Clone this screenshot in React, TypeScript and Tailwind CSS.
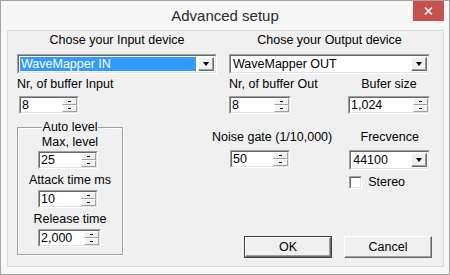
import React from "react";

const font = { fontFamily: '"Liberation Sans", Arial, sans-serif' };

function SpinBtn({ up }: { up: boolean }) {
  return (
    <div className="flex h-1/2 items-center justify-center border border-t-white border-l-white border-b-[#a0a0a0] border-r-[#a0a0a0] bg-[#f0f0f0]">
      <div className={up ? "h-[1px] w-[3px] bg-black" : "h-[1px] w-[3px] bg-black"} />
    </div>
  );
}

function Spin({ value, className }: { value: string; className: string }) {
  return (
    <div className={`flex h-[18px] border border-t-[#a0a0a0] border-l-[#a0a0a0] border-b-white border-r-white ${className}`}>
      <div className="flex flex-1 border border-t-[#696969] border-l-[#696969] border-b-[#e3e3e3] border-r-[#e3e3e3] bg-white">
        <span className="flex-1 pl-[1px] leading-[14px] text-black">{value}</span>
        <div className="flex w-[15px] flex-col">
          <SpinBtn up />
          <SpinBtn up={false} />
        </div>
      </div>
    </div>
  );
}

function DropBtn() {
  return (
    <div className="flex h-full w-[16px] items-center justify-center border border-t-white border-l-white border-b-[#696969] border-r-[#696969] bg-[#f0f0f0] shadow-[inset_-1px_-1px_0_#a0a0a0]">
      <div className="h-0 w-0 border-x-[3.5px] border-t-[4px] border-x-transparent border-t-black" />
    </div>
  );
}

function Combo({ value, selected, className }: { value: string; selected?: boolean; className: string }) {
  return (
    <div className={`flex h-[20px] border border-t-[#a0a0a0] border-l-[#a0a0a0] border-b-white border-r-white ${className}`}>
      <div className="flex flex-1 items-stretch gap-[2px] border border-t-[#696969] border-l-[#696969] border-b-[#e3e3e3] border-r-[#e3e3e3] bg-white p-[1px]">
        <span
          className={
            selected
              ? "flex-1 bg-[#3399ff] pl-[1px] leading-[14px] text-white"
              : "flex-1 pl-[1px] leading-[14px] text-black"
          }
        >
          {value}
        </span>
        <DropBtn />
      </div>
    </div>
  );
}

function Button({ label, def }: { label: string; def?: boolean }) {
  return (
    <div className={def ? "h-[22px] w-[88px] border border-[#404040]" : "h-[22px] w-[88px]"}>
      <div className="flex h-full w-full items-center justify-center border border-t-white border-l-white border-b-[#696969] border-r-[#696969] bg-[#f0f0f0] leading-[14px] text-black shadow-[inset_-1px_-1px_0_#a0a0a0]">
        {label}
      </div>
    </div>
  );
}

export default function App() {
  return (
    <div style={font} className="flex h-[275px] w-[450px] flex-col border border-[#a5a5a5] bg-[#f7f7f7] text-[12.5px] text-black">
      <div className="relative flex h-[29px] items-center justify-center">
        <span className="text-[15px] leading-[18px] text-[#2b2b2b]">Advanced setup</span>
        <div className="absolute right-[5px] top-0 flex h-[20px] w-[31px] items-center justify-center bg-[#c75050]">
          <svg width="9" height="8" viewBox="0 0 9 8">
            <path d="M1 0.5 L8 7.5 M8 0.5 L1 7.5" stroke="white" strokeWidth="1.6" />
          </svg>
        </div>
      </div>
      <div className="ml-[6px] mr-[5px] h-[237px] border border-[#dadada] bg-[#f0f0f0] pl-[9px] pt-[2px]">
        <div className="flex gap-[12px]">
          <div className="flex w-[200px] flex-col">
            <div className="text-center leading-[14px]">Chose your Input device</div>
            <Combo value="WaveMapper IN" selected className="mt-[7px] w-[200px]" />
            <div className="mt-[3px] leading-[14px]">Nr, of buffer Input</div>
            <Spin value="8" className="ml-[2px] mt-[5px] w-[60px]" />
          </div>
          <div className="flex w-[201px] flex-col">
            <div className="text-center leading-[14px]">Chose your Output device</div>
            <Combo value="WaveMapper OUT" className="mt-[7px] w-[201px]" />
            <div className="mt-[3px] flex justify-between">
              <div className="flex flex-col">
                <div className="leading-[14px]">Nr, of buffer Out</div>
                <Spin value="8" className="mt-[5px] w-[62px]" />
              </div>
              <div className="flex w-[82px] flex-col items-center">
                <div className="leading-[14px]">Bufer size</div>
                <Spin value="1,024" className="mt-[5px] w-[82px]" />
              </div>
            </div>
          </div>
        </div>
        <div className="mt-[6px] flex items-start">
          <fieldset className="h-[135px] w-[106px] border border-[#a0a0a0] shadow-[1px_1px_0_white,inset_1px_1px_0_white]">
            <legend className="mx-auto px-[1px] leading-[14px]">Auto level</legend>
            <div className="flex flex-col items-center">
              <div className="mt-[1px] leading-[14px]">Max, level</div>
              <Spin value="25" className="mt-[2px] ml-[20px] self-start w-[60px]" />
              <div className="mt-[4px] leading-[14px]">Attack time ms</div>
              <Spin value="10" className="mt-[3px] ml-[20px] self-start w-[60px]" />
              <div className="mt-[4px] leading-[14px]">Release time</div>
              <Spin value="2,000" className="mt-[3px] ml-[20px] self-start w-[63px]" />
            </div>
          </fieldset>
          <div className="ml-[89px] flex flex-col">
            <div className="mt-[10px] flex">
              <div className="flex flex-col">
                <div className="leading-[14px]">Noise gate (1/10,000)</div>
                <Spin value="50" className="ml-[18px] mt-[6px] w-[60px]" />
              </div>
              <div className="ml-[17px] flex w-[81px] flex-col">
                <div className="text-center leading-[14px]">Frecvence</div>
                <Combo value="44100" className="mt-[6px] w-[81px]" />
                <div className="mt-[5px] flex items-center">
                  <div className="h-[13px] w-[13px] border border-t-[#a0a0a0] border-l-[#a0a0a0] border-b-white border-r-white">
                    <div className="h-full w-full border border-t-[#696969] border-l-[#696969] border-b-[#e3e3e3] border-r-[#e3e3e3] bg-white" />
                  </div>
                  <span className="ml-[6px] leading-[14px]">Stereo</span>
                </div>
              </div>
            </div>
            <div className="ml-[32px] mt-[47px] flex gap-[12px]">
              <Button label="OK" def />
              <Button label="Cancel" />
            </div>
          </div>
        </div>
      </div>
    </div>
  );
}
